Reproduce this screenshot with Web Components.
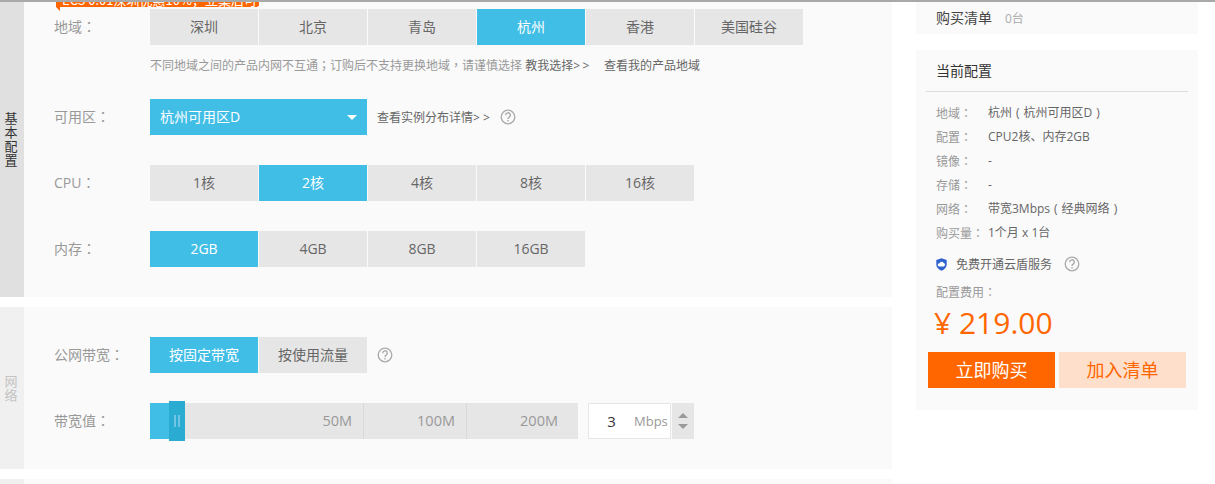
<!DOCTYPE html>
<html>
<head>
<meta charset="utf-8">
<style>
html,body{margin:0;padding:0;background:#fff;overflow:hidden;}
body{font-family:"Open Sans","Noto Sans CJK SC",sans-serif;font-size:13px;color:#666;height:484px;}
buy-page{height:484px;}
</style>
</head>
<body>
<buy-page>
  <config-panel title-text="基本配置" height="295" side="#e0e0e0" side-color="#333" slot="main" pad="7" shift="22">
    <promo-tag>ECS 0.01深圳优惠10%，立案后可见</promo-tag>
    <form-row label="地域：" h="36">
      <option-group options="深圳,北京,青岛,杭州,香港,美国硅谷" active="3"></option-group>
    </form-row>
    <region-note></region-note>
    <form-row label="可用区：" h="36" top="25">
      <zone-select>杭州可用区D</zone-select>
      <link-text left="10">查看实例分布详情<b>&gt;&gt;</b></link-text>
      <help-icon left="8"></help-icon>
    </form-row>
    <form-row label="CPU：" h="36" top="30">
      <option-group options="1核,2核,4核,8核,16核" active="1"></option-group>
    </form-row>
    <form-row label="内存：" h="36" top="30">
      <option-group options="2GB,4GB,8GB,16GB" active="0"></option-group>
    </form-row>
  </config-panel>
  <config-panel title-text="网络" height="162" side="#f0f0f0" side-color="#c4c4c4" slot="main" pad="30" gap="10">
    <form-row label="公网带宽：" h="36">
      <option-group options="按固定带宽,按使用流量" active="0"></option-group>
      <help-icon left="10"></help-icon>
    </form-row>
    <form-row label="带宽值：" h="36" top="30">
      <band-slider></band-slider>
      <band-input></band-input>
    </form-row>
  </config-panel>
  <config-panel title-text="" height="5" side="#f0f0f0" side-color="#ccc" slot="main" pad="0" gap="10"></config-panel>
  <order-side slot="side"></order-side>
</buy-page>

<script>
// full width punctuation sits centered in the TC cut, like in the reference
const punct = s => s.replace(/[：；，]/g, m => `<span style="font-family:'Noto Sans CJK TC',sans-serif">${m}</span>`);

class BuyPage extends HTMLElement {
  constructor(){
    super();
    this.attachShadow({mode:'open'});
    this.shadowRoot.innerHTML = `
    <style>
    :host{display:block;border-top:2px solid #a9a9a9;box-sizing:border-box;overflow:hidden;}
    .wrap{display:flex;align-items:flex-start;}
    .main{width:892px;flex:none;}
    .side{width:282px;margin-left:24px;flex:none;}
    </style>
    <div class="wrap">
      <div class="main"><slot name="main"></slot></div>
      <div class="side"><slot name="side"></slot></div>
    </div>`;
  }
}

class ConfigPanel extends HTMLElement {
  constructor(){
    super();
    this.attachShadow({mode:'open'});
    const h = this.getAttribute('height');
    const gap = this.getAttribute('gap') || 0;
    this.shadowRoot.innerHTML = `
    <style>
    :host{display:block;position:relative;margin-top:${gap}px;}
    .box{display:flex;height:${h}px;background:#fafafa;overflow:hidden;}
    .title{width:24px;box-sizing:border-box;padding:0 2px ${this.getAttribute('shift')||0}px 0;flex:none;background:${this.getAttribute('side')};color:${this.getAttribute('side-color')};
      display:flex;align-items:center;justify-content:center;text-align:center;font-size:13px;line-height:14px;
      font-family:"Noto Sans CJK SC",sans-serif;}
    .title span{width:13px;display:block;word-break:break-all;}
    .body{flex:1;padding-top:${this.getAttribute('pad')}px;}
    </style>
    <div class="box">
      <div class="title"><span>${this.getAttribute('title-text')}</span></div>
      <div class="body"><slot></slot></div>
    </div>`;
  }
}

class PromoTag extends HTMLElement {
  constructor(){
    super();
    this.attachShadow({mode:'open'});
    this.shadowRoot.innerHTML = `
    <style>
    :host{display:block;position:absolute;left:56px;top:-9px;width:203px;height:14px;background:#f60;color:#fff;
      font-size:13px;line-height:14px;white-space:nowrap;overflow:visible;}
    .txt{padding-left:6px;display:block;height:14px;overflow:hidden;font-family:"Noto Sans CJK SC",sans-serif;}
    .fold{position:absolute;left:0;top:14px;width:0;height:0;border-top:4px solid #f60;border-left:4px solid transparent;}
    </style>
    <span class="txt"><slot></slot></span><i class="fold"></i>`;
  }
}

class FormRow extends HTMLElement {
  constructor(){
    super();
    this.attachShadow({mode:'open'});
    this.shadowRoot.innerHTML = `
    <style>
    :host{display:flex;align-items:center;height:${this.getAttribute('h')}px;margin-top:${this.getAttribute('top')||0}px;padding-left:30px;}
    .lb{width:96px;flex:none;color:#999;font-size:14px;padding-bottom:2px;}
    .ct{display:flex;align-items:center;}
    </style>
    <div class="lb">${punct(this.getAttribute('label'))}</div>
    <div class="ct"><slot></slot></div>`;
  }
}

class OptionGroup extends HTMLElement {
  constructor(){
    super();
    this.attachShadow({mode:'open'});
    const active = +this.getAttribute('active');
    const items = this.getAttribute('options').split(',').map((t,i)=>`<div class="o ${i===active?'on':''}">${t}</div>`).join('');
    this.shadowRoot.innerHTML = `
    <style>
    :host{display:flex;gap:1px;}
    .o{width:108px;height:36px;line-height:36px;text-align:center;background:#e6e6e6;color:#666;font-size:14px;}
    .o.on{background:#41bee6;color:#fff;}
    </style>${items}`;
  }
}

class RegionNote extends HTMLElement {
  constructor(){
    super();
    this.attachShadow({mode:'open'});
    this.shadowRoot.innerHTML = `
    <style>
    :host{display:block;height:18px;margin-top:11px;padding-left:126px;line-height:18px;font-size:12px;color:#999;white-space:nowrap;}
    a{color:#666;}
    b{font-weight:400;letter-spacing:2.5px;}
    .mine{margin-left:12px;}
    </style>
    ${punct('不同地域之间的产品内网不互通；订购后不支持更换地域，请谨慎选择')} <a>教我选择<b>&gt;&gt;</b></a><a class="mine">查看我的产品地域</a>`;
  }
}

class ZoneSelect extends HTMLElement {
  constructor(){
    super();
    this.attachShadow({mode:'open'});
    this.shadowRoot.innerHTML = `
    <style>
    :host{display:flex;align-items:center;justify-content:space-between;box-sizing:border-box;width:217px;height:36px;
      padding:0 10px;background:#41bee6;color:#fff;font-size:14px;}
    span{padding-bottom:2px;}
    i{width:0;height:0;border:5px solid transparent;border-top-color:#fff;border-bottom:0;}
    </style>
    <span><slot></slot></span><i></i>`;
  }
}

class LinkText extends HTMLElement {
  constructor(){
    super();
    this.attachShadow({mode:'open'});
    this.shadowRoot.innerHTML = `
    <style>
    :host{display:block;width:115px;margin-left:${this.getAttribute('left')||0}px;font-size:12px;color:#666;white-space:nowrap;}
    ::slotted(b){font-weight:400;letter-spacing:3px;}
    </style>
    <slot></slot>`;
  }
}

class HelpIcon extends HTMLElement {
  constructor(){
    super();
    this.attachShadow({mode:'open'});
    this.shadowRoot.innerHTML = `
    <style>:host{display:block;width:16px;height:16px;margin-left:${this.getAttribute('left')||0}px;}svg{display:block;}</style>
    <svg width="16" height="16" viewBox="0 0 16 16" fill="none" stroke="#aaa">
      <circle cx="8" cy="8" r="6.8" stroke-width="1.3"/>
      <path d="M5.7 6.2a2.3 2.3 0 1 1 3.5 1.9c-.8.5-1.2.9-1.2 1.9" stroke-width="1.4"/>
      <path d="M8 10.9v1.5" stroke-width="1.4"/>
    </svg>`;
  }
}

class BandSlider extends HTMLElement {
  constructor(){
    super();
    this.attachShadow({mode:'open'});
    this.shadowRoot.innerHTML = `
    <style>
    :host{display:flex;position:relative;width:428px;height:36px;background:#e6e6e6;color:#999;font-size:14.5px;line-height:36px;}
    .fill{width:19px;background:#41bee6;flex:none;}
    .handle{position:absolute;left:19px;top:-2px;width:16px;height:40px;background:#2aabd2;display:flex;justify-content:center;align-items:center;gap:2px;}
    .handle i{width:2px;height:12px;background:#6fc5e3;display:block;}
    .t{box-sizing:border-box;text-align:right;padding-right:11px;border-right:1px solid #d9d9d9;}
    .t1{width:195px;}.t2{width:103px;}.t3{width:111px;border:0;padding-right:20px;}
    </style>
    <div class="fill"></div><div class="handle"><i></i><i></i></div>
    <div class="t t1">50M</div><div class="t t2">100M</div><div class="t t3">200M</div>`;
  }
}

class BandInput extends HTMLElement {
  constructor(){
    super();
    this.attachShadow({mode:'open'});
    this.shadowRoot.innerHTML = `
    <style>
    :host{display:flex;margin-left:10px;height:36px;}
    .box{box-sizing:border-box;width:83px;height:36px;background:#fff;border:1px solid #e6e6e6;display:flex;align-items:center;font-size:13px;color:#999;}
    .v{width:45px;text-align:center;color:#333;font-size:15px;}
    .sp{margin-left:1px;width:22px;height:36px;background:#e6e6e6;display:flex;flex-direction:column;align-items:center;justify-content:center;gap:6px;}
    .sp i{width:0;height:0;border-left:5px solid transparent;border-right:5px solid transparent;display:block;}
    .u{border-bottom:5px solid #999;}
    .d{border-top:5px solid #999;}
    </style>
    <div class="box"><span class="v">3</span><span>Mbps</span></div>
    <div class="sp"><i class="u"></i><i class="d"></i></div>`;
  }
}

class SideCard extends HTMLElement {
  constructor(){
    super();
    this.attachShadow({mode:'open'});
    this.shadowRoot.innerHTML = `
    <style>:host{display:block;background:#fafafa;}</style><slot></slot>`;
  }
}

class OrderSide extends HTMLElement {
  constructor(){
    super();
    this.attachShadow({mode:'open'});
    const rows = [['地域：','杭州<i>(</i>杭州可用区D<i>)</i>'],['配置：','CPU2核、内存2GB'],['镜像：','-'],['存储：','-'],['网络：','带宽3Mbps<i>(</i>经典网络<i>)</i>'],['购买量：','1个月 x 1台']]
      .map(r=>`<div class="r"><span class="k">${punct(r[0])}</span><span>${r[1]}</span></div>`).join('');
    this.shadowRoot.innerHTML = `
    <style>
    :host{display:block;font-size:12px;color:#666;}
    .cart{height:32px;padding-left:20px;line-height:32px;font-size:14px;color:#444;}
    .cart span{margin-left:13px;font-size:12px;color:#aaa;}
    .cur{margin-top:16px;height:360px;padding:0 10px;box-sizing:border-box;}
    .h{height:41px;line-height:42px;padding-left:10px;font-size:14px;color:#333;border-bottom:1px solid #ddd;}
    .list{padding:9px 0 0 10px;}
    .r{height:24px;line-height:24px;display:flex;white-space:nowrap;}
    .r i{font-style:normal;margin:0 4px;}
    .k{width:52px;color:#999;flex:none;}
    .free{display:flex;align-items:center;height:20px;margin:9px 0 0 10px;}
    .free svg{display:block;margin-right:9px;}
    .free help-icon{margin-left:12px;}
    .fee{margin:9px 0 0 10px;line-height:18px;color:#999;}
    .price{margin:2px 0 0 8px;height:37px;line-height:37px;font-size:30px;color:#f60;white-space:nowrap;}
    .btns{display:flex;gap:4px;margin:11px 0 0 2px;}
    .b{width:127px;height:36px;line-height:36px;text-align:center;font-size:18px;}
    .buy{background:#f60;color:#fff;}
    .add{background:#fddfcb;color:#f60;}
    </style>
    <side-card class="cart">购买清单<span>0台</span></side-card>
    <side-card class="cur">
      <div class="h">当前配置</div>
      <div class="list">${rows}</div>
      <div class="free">
        <svg width="11" height="13" viewBox="0 0 11 13"><path d="M5.5 0.3L10.7 2V6.6C10.7 9.6 8.3 11.7 5.5 12.7C2.7 11.7 0.3 9.6 0.3 6.6V2Z" fill="#2f62cf"/><path d="M3.3 8.4a1.6 1.6 0 0 1 .1-3.2 2.3 2.3 0 0 1 4.3-.1 1.7 1.7 0 0 1 0 3.3z" fill="#fff"/></svg>
        <span>免费开通云盾服务</span><help-icon></help-icon>
      </div>
      <div class="fee">配置费用${punct('：')}</div>
      <div class="price">¥ 219.00</div>
      <div class="btns"><div class="b buy">立即购买</div><div class="b add">加入清单</div></div>
    </side-card>`;
  }
}

customElements.define('side-card',SideCard);
customElements.define('help-icon',HelpIcon);
customElements.define('buy-page',BuyPage);
customElements.define('config-panel',ConfigPanel);
customElements.define('promo-tag',PromoTag);
customElements.define('form-row',FormRow);
customElements.define('option-group',OptionGroup);
customElements.define('region-note',RegionNote);
customElements.define('zone-select',ZoneSelect);
customElements.define('link-text',LinkText);
customElements.define('band-slider',BandSlider);
customElements.define('band-input',BandInput);
customElements.define('order-side',OrderSide);
</script>
</body>
</html>
